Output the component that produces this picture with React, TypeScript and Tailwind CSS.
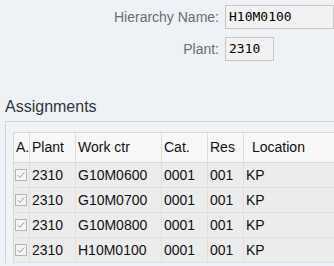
import React from "react";

type Row = { plant: string; workCtr: string; cat: string; res: string; location: string };

const rows: Row[] = [
  { plant: "2310", workCtr: "G10M0600", cat: "0001", res: "001", location: "KP" },
  { plant: "2310", workCtr: "G10M0700", cat: "0001", res: "001", location: "KP" },
  { plant: "2310", workCtr: "G10M0800", cat: "0001", res: "001", location: "KP" },
  { plant: "2310", workCtr: "H10M0100", cat: "0001", res: "001", location: "KP" },
];

const cols = "grid grid-cols-[16px_46px_86px_46px_36px_1fr]";

function Check() {
  return (
    <div className="w-[12px] h-[12px] border border-[#b5b5b5] bg-[#f4f4f4] flex items-center justify-center">
      <svg viewBox="0 0 12 12" className="w-[10px] h-[10px]">
        <path d="M2 6.2 L4.6 8.8 L10 2.8" fill="none" stroke="#9a9a9a" strokeWidth="1.2" />
      </svg>
    </div>
  );
}

export default function App() {
  return (
    <div className="w-[334px] h-[266px] overflow-hidden bg-[#eef2f6] font-['Liberation_Sans',Arial,sans-serif]">
      {/* Header fields */}
      <div className="flex flex-col gap-[8px] pt-[5px] pl-[225px]">
        <div className="flex items-center relative">
          <span className="absolute right-[115px] text-[14px] text-[#6a6d70] whitespace-nowrap">Hierarchy Name:</span>
          <div className="w-[109px] h-[24px] bg-[#f2f2f2] border border-[#c6c6c6] flex items-center pl-[3px] font-['DejaVu_Sans_Mono',monospace] text-[13px] text-black">
            H10M0100
          </div>
        </div>
        <div className="flex items-center relative">
          <span className="absolute right-[115px] text-[14px] text-[#6a6d70] whitespace-nowrap">Plant:</span>
          <div className="w-[49px] h-[24px] bg-[#f2f2f2] border border-[#c6c6c6] flex items-center pl-[3px] font-['DejaVu_Sans_Mono',monospace] text-[13px] text-black">
            2310
          </div>
        </div>
      </div>

      {/* Assignments */}
      <div className="mt-[36px] pl-[5px] text-[16px] leading-[20px] text-[#32363a]">Assignments</div>
      <div className="mt-[4px] ml-[5px] border-t border-l border-[#cfd3d7] bg-[#f1f3f5] pt-[10px] pl-[7px]">
        <div className="border-t border-l border-[#d8d8d8] text-[14px] text-[#111]">
          <div className={`${cols} h-[30px] bg-[#f7f7f7] border-b border-[#dcdcdc]`}>
            <div className="flex items-center pl-[2px] border-r border-[#dcdcdc] overflow-hidden">A.</div>
            <div className="flex items-center pl-[2px] border-r border-[#dcdcdc]">Plant</div>
            <div className="flex items-center pl-[2px] border-r border-[#dcdcdc]">Work ctr</div>
            <div className="flex items-center pl-[2px] border-r border-[#dcdcdc]">Cat.</div>
            <div className="flex items-center pl-[2px] border-r border-[#dcdcdc]">Res</div>
            <div className="flex items-center pl-[8px]">Location</div>
          </div>
          {rows.map((r, i) => (
            <div key={i} className={`${cols} h-[25px] bg-[#ececec] border-b border-[#e0e0e0]`}>
              <div className="flex items-center pl-[1px] border-r border-[#e0e0e0]">
                <Check />
              </div>
              <div className="flex items-center pl-[2px] border-r border-[#e0e0e0]">{r.plant}</div>
              <div className="flex items-center pl-[2px] border-r border-[#e0e0e0]">{r.workCtr}</div>
              <div className="flex items-center pl-[2px] border-r border-[#e0e0e0]">{r.cat}</div>
              <div className="flex items-center pl-[2px] border-r border-[#e0e0e0]">{r.res}</div>
              <div className="flex items-center pl-[2px]">{r.location}</div>
            </div>
          ))}
        </div>
      </div>
    </div>
  );
}
